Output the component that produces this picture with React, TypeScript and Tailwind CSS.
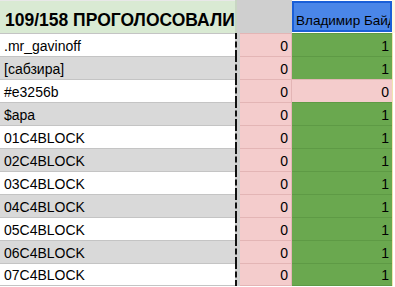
const rows = [
  { name: '.mr_gavinoff', a: 0, b: 1 },
  { name: '[сабзира]', a: 0, b: 1 },
  { name: '#e3256b', a: 0, b: 0 },
  { name: '$apa', a: 0, b: 1 },
  { name: '01C4BLOCK', a: 0, b: 1 },
  { name: '02C4BLOCK', a: 0, b: 1 },
  { name: '03C4BLOCK', a: 0, b: 1 },
  { name: '04C4BLOCK', a: 0, b: 1 },
  { name: '05C4BLOCK', a: 0, b: 1 },
  { name: '06C4BLOCK', a: 0, b: 1 },
  { name: '07C4BLOCK', a: 0, b: 1 },
];

const cols = 'grid grid-cols-[235px_5px_52px_100px_3px]';

export default function App() {
  return (
    <div className="w-[395px] h-[287px] overflow-hidden bg-white text-black font-['Liberation_Sans',Arial,sans-serif]">
      {/* header row */}
      <div className={`${cols} h-[33px]`}>
        <div className="bg-[#d9ead3] border-t border-[#e8e8e8] flex items-end pb-[4px] pl-[5px] text-[17.5px] font-bold leading-none whitespace-nowrap overflow-hidden">
          109/158 ПРОГОЛОСОВАЛИ
        </div>
        <div className="bg-[#cfcfcf] border-l-2 border-[#c9d6c4]" />
        <div className="bg-[#cfcfcf]" />
        <div className="bg-[#4a86e8] border-2 border-[#1a5fd8] my-px flex items-end pb-[3px] pl-[2px] text-[13.5px] leading-none whitespace-nowrap overflow-hidden">
          Владимир Байдаков
        </div>
        <div className="bg-[#fdf7e2]" />
      </div>

      {rows.map((r, i) => {
        const odd = i % 2 === 1;
        const last = i === rows.length - 1;
        const hit = r.b === 1;
        return (
          <div key={i} className={`${cols} h-[23px]`}>
            <div className={`${odd ? 'bg-[#d9d9d9]' : 'bg-white'} border-t border-[#c4c4c4] ${last ? 'border-b' : ''} flex items-end pb-[3px] pl-[4px] text-[14px] leading-none whitespace-nowrap overflow-hidden`}>
              {r.name}
            </div>
            {/* page break marker + gutter */}
            <div className="bg-[#d0d0d0] border-l-2 border-dashed border-[#111111]" />
            <div className={`bg-[#f4cccc] border-t border-r border-[#e3b5b5] ${last ? 'border-b' : ''} flex items-end justify-end pb-[3px] pr-[3px] text-[14px] leading-none`}>
              {r.a}
            </div>
            <div className={`${hit ? 'bg-[#6aa84f] border-[#5e9a45]' : 'bg-[#f4cccc] border-[#e3b5b5]'} border-t ${last ? 'border-b' : ''} flex items-end justify-end pb-[3px] pr-[3px] text-[14px] leading-none`}>
              {r.b}
            </div>
            <div className="bg-white border-l border-[#f1e4b0]" />
          </div>
        );
      })}
    </div>
  );
}
